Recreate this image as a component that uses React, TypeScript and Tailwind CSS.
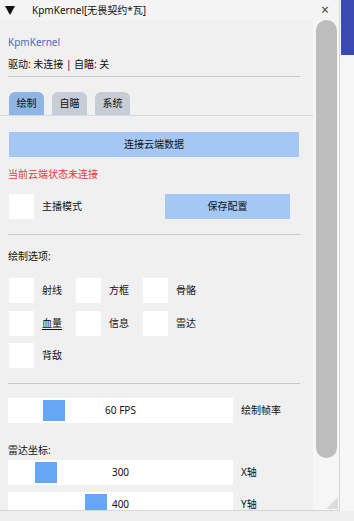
import React from 'react';

const font = { fontFamily: '"Noto Sans", "Noto Sans CJK SC", sans-serif' };

interface SliderItem {
  value: string;
  label: string;
  grab: number;
}

const Checkbox: React.FC<{ label: string; underline?: boolean }> = ({ label, underline }) => (
  <div className="flex items-center h-[25px]">
    <div className="w-[25px] h-[25px] bg-white shrink-0" />
    <span className={`ml-[8px] ${underline ? 'underline underline-offset-2' : ''}`}>{label}</span>
  </div>
);

const Slider: React.FC<{ item: SliderItem }> = ({ item }) => (
  <div className="flex items-center h-[25px] shrink-0">
    <div className="relative w-[225px] h-[25px] bg-white flex items-center justify-center">
      <div
        className="absolute top-[2px] w-[22px] h-[21px] bg-[#66a6f6]"
        style={{ left: item.grab }}
      />
      <span className="relative">{item.value}</span>
    </div>
    <span className="ml-[8px]">{item.label}</span>
  </div>
);

const Separator: React.FC<{ className?: string }> = ({ className }) => (
  <div className={`h-px w-[292px] bg-[#c9c9c9] shrink-0 ${className ?? ''}`} />
);

const App: React.FC = () => {
  const drawOptions = ['射线', '方框', '骨骼', '血量', '信息', '雷达', '背敌'];

  return (
    <div className="w-[354px] h-[521px] bg-[#efefef] overflow-hidden flex flex-col text-[10px] text-[#111]" style={font}>
      <div className="flex h-[511px] shrink-0">
        {/* window */}
        <div className="w-[340px] h-full flex flex-col border-r border-b border-[#d6d6d6] bg-[#f0f0f0]">
          {/* title bar */}
          <div className="h-[20px] flex items-center bg-[#f4f4f4] shrink-0">
            <svg className="ml-[5px]" width="10" height="9" viewBox="0 0 10 9">
              <polygon points="0,0 10,0 5,9" fill="#111" />
            </svg>
            <span className="ml-[17px] text-[10px]">KpmKernel[无畏契约*瓦]</span>
            <span className="ml-auto mr-[10px] text-[14px] leading-none text-[#444]">×</span>
          </div>
          <div className="flex flex-1 min-h-0">
            {/* content */}
            <div className="w-[313px] flex flex-col pl-[8px] overflow-hidden">
              <div className="mt-[14px] h-[16px] leading-[16px] text-[#4a6bc0]">KpmKernel</div>
              <div className="mt-[6px] h-[16px] leading-[16px]">驱动: 未连接 | 自瞄: 关</div>
              <Separator className="mt-[4px]" />
              <div className="mt-[15px] -ml-[8px] pl-[9px] flex items-end gap-[8px] h-[24px] border-b border-[#d3dae4] shrink-0">
                <div className="w-[35px] h-[23px] rounded-t-[6px] bg-[#8fb5e2] flex items-center justify-center">绘制</div>
                <div className="w-[35px] h-[23px] rounded-t-[6px] bg-[#c7cdd4] flex items-center justify-center">自瞄</div>
                <div className="w-[35px] h-[23px] rounded-t-[6px] bg-[#c7cdd4] flex items-center justify-center">系统</div>
              </div>
              <div className="mt-[16px] ml-px w-[290px] h-[25px] bg-[#a4c8f3] flex items-center justify-center shrink-0">连接云端数据</div>
              <div className="mt-[9px] h-[16px] leading-[16px] text-[#e83a3a]">当前云端状态未连接</div>
              <div className="mt-[12px] ml-px flex items-center h-[25px] shrink-0">
                <div className="w-[156px]">
                  <Checkbox label="主播模式" />
                </div>
                <div className="w-[125px] h-[25px] bg-[#a4c8f3] flex items-center justify-center">保存配置</div>
              </div>
              <Separator className="mt-[15px]" />
              <div className="mt-[13px] h-[16px] leading-[16px]">绘制选项:</div>
              <div className="mt-[14px] ml-px grid grid-cols-[67px_67px_67px] gap-y-[7.5px]">
                {drawOptions.map((o) => (
                  <Checkbox key={o} label={o} underline={o === '血量'} />
                ))}
              </div>
              <Separator className="mt-[15px]" />
              <div className="mt-[14px]">
                <Slider item={{ value: '60 FPS', label: '绘制帧率', grab: 35 }} />
              </div>
              <div className="mt-[19px] h-[16px] leading-[16px] shrink-0">雷达坐标:</div>
              <div className="mt-[2px] flex flex-col gap-[7px]">
                <Slider item={{ value: '300', label: 'X轴', grab: 27 }} />
                <Slider item={{ value: '400', label: 'Y轴', grab: 77 }} />
              </div>
            </div>
            {/* scrollbar */}
            <div className="w-[26px] bg-[#f6f6f6] relative flex flex-col pl-[3px] pr-[2px]">
              <div className="h-[438px] rounded-full bg-[#bdbdbd]" />
              <svg className="absolute right-[1px] bottom-[1px]" width="12" height="12" viewBox="0 0 12 12">
                <polygon points="12,0 12,12 0,12" fill="#dcdcdc" />
              </svg>
            </div>
          </div>
        </div>
        {/* background strip */}
        <div className="flex-1 flex flex-col bg-[#f6f6f6]">
          <div className="h-[55px] ml-px bg-[#3a4bb0]" />
        </div>
      </div>
    </div>
  );
};

export default App;
